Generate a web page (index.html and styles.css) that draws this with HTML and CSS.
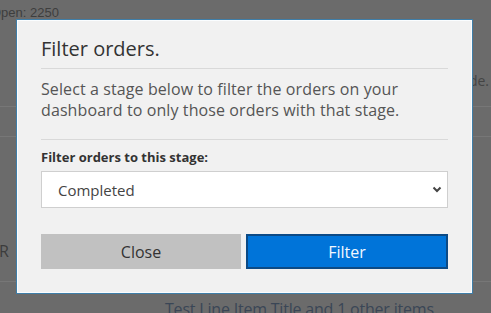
FILE: index.html
```html
<!DOCTYPE html>
<html lang="en">
<head>
<meta charset="utf-8">
<title>Filter orders</title>
<link rel="stylesheet" href="styles.css">
</head>
<body>
<div class="page">
  <div class="section section-top">
    <div class="stats">Open: 2250</div>
    <div class="note">Read the guide.</div>
  </div>
  <div class="section section-head"></div>
  <div class="section section-row">
    <div class="row-letter">R</div>
  </div>
  <div class="section-items">
    <span class="item-link">Test Line Item Title and 1 other items</span>
  </div>
</div>

<div class="modal">
  <h2 class="modal-title">Filter orders.</h2>
  <p class="modal-text">Select a stage below to filter the orders on your dashboard to only those orders with that stage.</p>
  <label class="field-label" for="stage">Filter orders to this stage:</label>
  <div class="select-wrap">
    <select id="stage" class="select">
      <option>Completed</option>
    </select>
    <svg class="chevron" width="10" height="7" viewBox="0 0 10 7"><path d="M1.5 1.5 L5 5 L8.5 1.5" fill="none" stroke="#444" stroke-width="2"/></svg>
  </div>
  <div class="actions">
    <button class="btn btn-close">Close</button>
    <button class="btn btn-filter">Filter</button>
  </div>
</div>
</body>
</html>
```
FILE: styles.css
```css
html, body {
  margin: 0;
  padding: 0;
  background: #6b6b6b;
}
body {
  font-family: "Open Sans", "Noto Sans", sans-serif;
  position: relative;
}
.page {
  width: 491px;
  height: 313px;
  overflow: hidden;
  display: flex;
  flex-direction: column;
  color: #404040;
}
.section {
  flex: none;
  border-bottom: 1px solid #777777;
  box-sizing: border-box;
}
.section-top {
  height: 107px;
  display: flex;
  flex-direction: column;
}
.stats {
  font-family: "Liberation Sans", Arial, sans-serif;
  font-size: 13px;
  line-height: 15px;
  margin-top: 5px;
  margin-left: -9px;
  color: #3e3e3e;
}
.note {
  margin-top: 52px;
  text-align: right;
  font-size: 14px;
  line-height: 18px;
  padding-right: 2px;
  color: #444;
}
.section-head {
  height: 30px;
}
.section-row {
  height: 145px;
}
.row-letter {
  margin-top: 104px;
  font-size: 16px;
  line-height: 20px;
  margin-left: -1px;
  color: #3c3c3c;
}
.section-items {
  flex: none;
  height: 31px;
  box-sizing: border-box;
  padding: 16px 0 0 165px;
  font-size: 16px;
  line-height: 22px;
  letter-spacing: -0.2px;
  white-space: nowrap;
}
.item-link {
  color: #3a4656;
}

.modal {
  position: absolute;
  left: 16px;
  top: 19px;
  width: 457px;
  height: 275px;
  box-sizing: border-box;
  background: #f1f1f1;
  border: 1px solid #3f7ea8;
  box-shadow: inset 0 0 0 1px #fafdff;
  padding: 17px 24px 0 24px;
  display: flex;
  flex-direction: column;
  color: #333;
}
.modal-title {
  margin: 0;
  font-size: 20px;
  line-height: 24px;
  font-weight: 400;
  color: #333;
  padding-bottom: 7px;
  border-bottom: 1px solid #d9d9d9;
}
.modal-text {
  margin: 0;
  padding: 10px 0 18px;
  font-size: 16px;
  line-height: 21px;
  letter-spacing: 0.1px;
  color: #555;
  border-bottom: 1px solid #d9d9d9;
}
.field-label {
  margin-top: 9px;
  font-size: 13px;
  line-height: 16px;
  font-weight: 700;
  color: #333;
}
.select-wrap {
  margin-top: 6px;
  position: relative;
}
.select {
  display: block;
  width: 100%;
  height: 37px;
  box-sizing: border-box;
  -webkit-appearance: none;
  appearance: none;
  background: #fff;
  border: 1px solid #cfcfcf;
  border-radius: 0;
  padding: 0 16px;
  font-family: inherit;
  font-size: 15px;
  color: #444;
}
.chevron {
  position: absolute;
  right: 6px;
  top: 15px;
}
.actions {
  margin-top: 26px;
  display: flex;
  gap: 5px;
}
.btn {
  flex: 1;
  height: 35px;
  box-sizing: border-box;
  font-family: inherit;
  font-size: 16px;
  border-radius: 0;
  cursor: pointer;
}
.btn-close {
  background: #c1c1c1;
  border: 1px solid #c1c1c1;
  color: #333;
}
.btn-filter {
  background: #0074d9;
  border: 2px solid #0c4a85;
  color: #f2f8ff;
}
```
